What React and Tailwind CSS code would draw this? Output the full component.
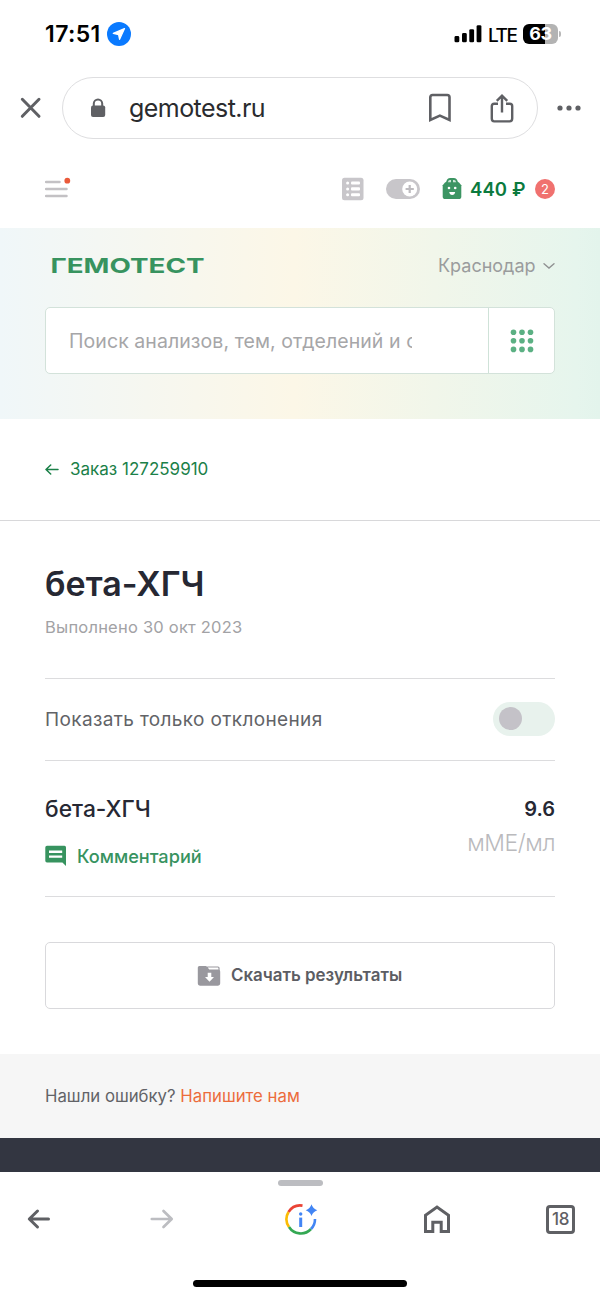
import React from "react";

function StatusBar() {
  return (
    <div className="flex h-[68px] items-center justify-between pl-[45px] pr-[39px]">
      <div className="flex items-center gap-[5px]">
        <span className="w-[57px] whitespace-nowrap text-[23px] font-semibold leading-none tracking-[0.4px] text-black">17:51</span>
        <svg width="24" height="24" viewBox="0 0 24 24">
          <circle cx="12" cy="12" r="12" fill="#0a7aff" />
          <path d="M17.5 6.6 12.6 17.3 11.6 12.6 6.3 11.4Z" fill="#fff" stroke="#fff" strokeWidth="1.3" strokeLinejoin="round" />
        </svg>
      </div>
      <div className="flex items-center">
        <svg width="28" height="18" viewBox="0 0 28 18" fill="#000">
          <rect x="0.5" y="11" width="4.8" height="6.3" rx="1.4" />
          <rect x="8" y="8" width="4.8" height="9.3" rx="1.4" />
          <rect x="15.3" y="4.2" width="4.8" height="13.1" rx="1.4" />
          <rect x="22.6" y="0.2" width="4.8" height="17.1" rx="1.4" />
        </svg>
        <span className="ml-[6px] w-[35px] whitespace-nowrap pt-[2px] text-[19px] font-medium leading-none tracking-[-1.4px] text-black">LTE</span>
        <div className="flex h-[20px] w-[35px] items-center justify-center rounded-[6px] bg-[linear-gradient(90deg,#000_62%,#b3b3b3_62%)] text-[18px] font-bold leading-none tracking-[-0.4px] text-white">63</div>
        <div className="ml-[1px] h-[6px] w-[2px] rounded-r-full bg-[#b8b8b8]" />
      </div>
    </div>
  );
}

function AddressBar() {
  return (
    <div className="flex h-[80px] items-center pl-[20px]">
      <svg width="22" height="22" viewBox="0 0 22 22" fill="none" stroke="#5f6064" strokeWidth="3" strokeLinecap="round">
        <path d="M2.3 2.3 19 19.3M19 2.3 2.3 19.3" />
      </svg>
      <div className="ml-[20px] flex h-[62px] w-[476px] shrink-0 items-center rounded-full border-[1.5px] border-[#dedee0] pl-[27px]">
        <svg width="16" height="20" viewBox="0 0 16 20">
          <path d="M3.8 9V5.6a4.2 4.2 0 0 1 8.4 0V9" fill="none" stroke="#5f6064" strokeWidth="2" />
          <rect x="1" y="7.6" width="14.2" height="11.4" rx="2" fill="#5f6064" />
        </svg>
        <span className="ml-[23px] w-[299px] text-[25px] leading-[30px] tracking-[-0.55px] text-[#2a2b2e]">gemotest.ru</span>
        <svg width="24" height="30" viewBox="0 0 24 30" fill="none" stroke="#5f6064" strokeWidth="2.6">
          <path d="M2.3 27V4.3Q2.3 2 4.6 2H19.2Q21.5 2 21.5 4.3V27L11.9 22.6Z" />
        </svg>
        <svg className="ml-[37px]" width="26" height="32" viewBox="0 0 26 32" fill="none" stroke="#5f6064" strokeWidth="2.4">
          <path d="M9 11.7H5.2Q2.8 11.7 2.8 14.1V26.6Q2.8 29.4 5.2 29.4H20.6Q23.2 29.4 23.2 26.6V14.1Q23.2 11.7 20.8 11.7H17" />
          <path d="M13 20.5V4.5M7.8 8.9 13 3.7 18.2 8.9" />
        </svg>
      </div>
      <svg className="ml-[18px]" width="26" height="6" viewBox="0 0 26 6" fill="#5f6064">
        <circle cx="4" cy="3" r="2.6" /><circle cx="13" cy="3" r="2.6" /><circle cx="22" cy="3" r="2.6" />
      </svg>
    </div>
  );
}

function SiteBar() {
  return (
    <div className="flex h-[80px] items-center justify-between px-[45px] pt-[2px]">
      <svg width="26" height="24" viewBox="0 0 26 24">
        <path d="M1 5H14.5M1 12H21.5M1 19H21.5" stroke="#c3c1c4" strokeWidth="2.5" strokeLinecap="round" />
        <circle cx="22.3" cy="3.7" r="2.9" fill="#ea5a3a" />
      </svg>
      <div className="flex items-center">
        <svg width="22" height="24" viewBox="0 0 22 24">
          <rect width="21.5" height="22.6" y="0.7" rx="2.5" fill="#c8c6ca" />
          <g fill="#fff">
            <circle cx="5.6" cy="6" r="1.5" /><circle cx="5.6" cy="11.9" r="1.5" /><circle cx="5.6" cy="17.7" r="1.5" />
            <rect x="9" y="4.4" width="9" height="3.1" rx="1" /><rect x="9" y="10.3" width="9" height="3.1" rx="1" /><rect x="9" y="16.2" width="9" height="3.1" rx="1" />
          </g>
        </svg>
        <svg className="ml-[22px]" width="34" height="20" viewBox="0 0 34 20">
          <rect width="34" height="20" rx="10" fill="#c8c6ca" />
          <circle cx="23.7" cy="10" r="7.5" fill="#fff" />
          <path d="M23.7 5.9V14.1M19.6 10H27.8" stroke="#bdbbbf" strokeWidth="2.2" />
        </svg>
        <svg className="ml-[22px]" width="20" height="22" viewBox="0 0 20 22">
          <path d="M4.2 6 5.8 2.2Q6.4 1 8 1H12Q13.6 1 14.2 2.2L15.8 6" fill="#cde5d7" stroke="#3c9563" strokeWidth="1.8" />
          <path d="M10 1V5" stroke="#3c9563" strokeWidth="2" />
          <path d="M3.2 4.3H16.8L19.3 7.2V18.4Q19.3 21 16.7 21H3.3Q.7 21 .7 18.4V7.2Z" fill="#3c9563" />
          <circle cx="7" cy="10" r="1.3" fill="#fff" /><circle cx="13.2" cy="10" r="1.3" fill="#fff" />
          <path d="M7.2 14H13.2Q12.7 17 10.2 17T7.2 14Z" fill="#fff" />
        </svg>
        <span className="ml-[8px] w-[65px] whitespace-nowrap text-[18.5px] font-semibold leading-none tracking-[0.1px] text-[#0b7a3e]">440 ₽</span>
        <div className="flex size-[20px] items-center justify-center rounded-full bg-[#f0716f] text-[13px] leading-none text-white">2</div>
      </div>
    </div>
  );
}

function Hero() {
  return (
    <div className="h-[191px] bg-[linear-gradient(90deg,#f0f7f9_0%,#fcf7e7_49%,#e6f5ed_96%,#e3f4ec_100%)] px-[45px] pt-[23px]">
      <div className="flex h-[30px] items-center justify-between">
        <svg width="165" height="22" viewBox="0 0 165 22">
          <text x="5.5" y="18.4" fontFamily="Inter, sans-serif" fontSize="20.5" fontWeight="700" fill="#37935f" textLength="154" lengthAdjust="spacingAndGlyphs">ГЕМОТЕСТ</text>
        </svg>
        <div className="flex items-center">
          <span className="w-[105px] whitespace-nowrap text-[18px] leading-none text-[#9a9c9d]">Краснодар</span>
          <svg width="12" height="8" viewBox="0 0 12 8" fill="none" stroke="#8f9192" strokeWidth="1.4" strokeLinecap="round">
            <path d="M1 1.8 6 6 11 1.8" />
          </svg>
        </div>
      </div>
      <div className="mt-[26px] flex h-[67px] rounded-[5px] border border-[#d3e2da] bg-white">
        <div className="flex w-[443px] items-center border-r border-[#cfe2d8] pl-[23px]">
          <span className="w-[343px] overflow-hidden whitespace-nowrap text-[19.5px] leading-[28px] tracking-[0.07px] text-[#a6a6a8]">Поиск анализов, тем, отделений и с</span>
        </div>
        <div className="flex flex-1 items-center justify-center">
          <svg width="24" height="26" viewBox="0 0 24 26" fill="#5bb083">
            <circle cx="3.5" cy="4.2" r="2.8" /><circle cx="12" cy="4.2" r="2.8" /><circle cx="20.5" cy="4.2" r="2.8" />
            <circle cx="3.5" cy="12.8" r="2.8" /><circle cx="12" cy="12.8" r="2.8" /><circle cx="20.5" cy="12.8" r="2.8" />
            <circle cx="3.5" cy="21.4" r="2.8" /><circle cx="12" cy="21.4" r="2.8" /><circle cx="20.5" cy="21.4" r="2.8" />
          </svg>
        </div>
      </div>
    </div>
  );
}

function OrderLink() {
  return (
    <div className="flex h-[102px] items-center border-b-[1.5px] border-[#d8d8da] px-[45px]">
      <svg width="14" height="12" viewBox="0 0 14 12" fill="none" stroke="#1b8048" strokeWidth="1.5" strokeLinecap="round" strokeLinejoin="round">
        <path d="M13 5.5H1.2M5.7 1 1 5.5 5.7 10" />
      </svg>
      <span className="ml-[11px] text-[17px] leading-none text-[#1b8048]">Заказ 127259910</span>
    </div>
  );
}

function Results() {
  return (
    <main className="h-[533px] px-[45px] pt-[40px]">
      <h1 className="text-[34px] font-semibold leading-[46px] text-[#262833]">бета-ХГЧ</h1>
      <p className="mt-[7px] text-[16.5px] leading-[26px] tracking-[0.22px] text-[#a2a2a5]">Выполнено 30 окт 2023</p>
      <div className="mt-[38px] flex h-[83px] items-center justify-between border-y-[1.5px] border-[#dcdcde]">
        <span className="text-[19px] leading-none tracking-[0.36px] text-[#626367]">Показать только отклонения</span>
        <div className="mb-[2px] flex h-[34px] w-[62px] items-center rounded-full bg-[#e8f2ed] pl-[6px]">
          <div className="size-[23px] rounded-full bg-[#c4c2c8]" />
        </div>
      </div>
      <div className="flex h-[136px] justify-between border-b-[1.5px] border-[#dcdcde] pt-[33px]">
        <div>
          <div className="text-[22.8px] font-medium leading-[30px] text-[#262833]">бета-ХГЧ</div>
          <div className="mt-[17px] flex h-[30px] items-center">
            <svg width="22" height="22" viewBox="0 0 22 22">
              <path d="M2 .8H19.5Q21 .8 21 2.4V21L17.4 17.5H2Q.3 17.5 .3 15.8V2.4Q.3.8 2 .8Z" fill="#37935f" />
              <path d="M4 6.7H17.2M4 11.6H17.2" stroke="#fff" strokeWidth="2.4" />
            </svg>
            <span className="ml-[10px] text-[18.15px] font-medium leading-none text-[#37935f]">Комментарий</span>
          </div>
        </div>
        <div className="text-right">
          <div className="text-[20px] font-semibold leading-[30px] text-[#262833]">9.6</div>
          <div className="mt-[4px] text-[23px] font-light leading-[30px] tracking-[-0.45px] text-[#bababd]">мМЕ/мл</div>
        </div>
      </div>
      <button className="mt-[45px] flex h-[67px] w-full items-center rounded-[5px] border-[1.5px] border-[#d9d9dc] pl-[151px]">
        <svg width="24" height="22" viewBox="0 0 24 22">
          <rect x="10" y="2" width="12" height="8" rx="1" fill="#fff" stroke="#99989e" strokeWidth="1.2" />
          <path d="M2.4 1H8.6Q9.5 1 10.2 2L12.3 4.6H21Q23.2 4.6 23.2 6.6V18.6Q23.2 20.7 21 20.7H3Q.8 20.7 .8 18.6V2.6Q.8 1 2.4 1Z" fill="#99989e" />
          <path d="M10.7 7.8H14.3V12H17L12.5 16.7 8 12H10.7Z" fill="#fff" />
        </svg>
        <span className="ml-[10px] whitespace-nowrap text-[16.9px] font-semibold leading-none text-[#5c5d63]">Скачать результаты</span>
      </button>
    </main>
  );
}

function BrowserNav() {
  return (
    <div className="flex h-[126px] flex-col items-center bg-white pt-[8px]">
      <div className="h-[6px] w-[45px] rounded-full bg-[#bcbdc1]" />
      <div className="mt-[15px] flex h-[36px] w-full items-center pl-[27px]">
        <svg width="24" height="22" viewBox="0 0 24 22" fill="none" stroke="#5f6064" strokeWidth="3" strokeLinecap="round" strokeLinejoin="round">
          <path d="M21.5 11H3M10.5 3 2.3 11 10.5 19" />
        </svg>
        <svg className="ml-[99px]" width="24" height="22" viewBox="0 0 24 22" fill="none" stroke="#bcbdc1" strokeWidth="2.7" strokeLinecap="round" strokeLinejoin="round">
          <path d="M1.8 11H21M13.5 3 21.7 11 13.5 19" />
        </svg>
        <svg className="ml-[110px]" width="34" height="34" viewBox="0 0 34 34" fill="none" strokeWidth="2.6">
          <path d="M4.5 10A14 14 0 0 1 18.5 3.6" stroke="#ea4335" />
          <path d="M4.5 10A14 14 0 0 0 5 25" stroke="#fbbc04" />
          <path d="M5 25A14 14 0 0 0 27 27" stroke="#34a853" />
          <path d="M27 27A14 14 0 0 0 31 17" stroke="#4285f4" />
          <path d="M16.7 15.6V25" stroke="#4285f4" strokeWidth="3" />
          <circle cx="16.7" cy="12" r="1.7" fill="#4285f4" />
          <path d="M27.5 2.3Q28.9 6.8 33.3 8.2 28.9 9.6 27.5 14 26.1 9.6 21.7 8.2 26.1 6.8 27.5 2.3Z" fill="#4285f4" />
        </svg>
        <svg className="ml-[105px]" width="28" height="30" viewBox="0 0 28 30" fill="none" stroke="#5f6064" strokeWidth="3">
          <path d="M2.5 27.5V11.2L14 3 25.5 11.2V27.5H18.2V18.2H9.8V27.5Z" />
        </svg>
        <div className="ml-[95px] flex size-[29px] items-center justify-center rounded-[4px] border-[3px] border-[#5f6064] text-[17px] font-medium leading-none tracking-[-0.5px] text-[#5f6064]">18</div>
      </div>
      <div className="mt-[43px] h-[7px] w-[214px] rounded-full bg-black" />
    </div>
  );
}

export default function App() {
  return (
    <div className="h-[1297px] w-[600px] overflow-hidden bg-white font-['Inter',sans-serif]">
      <StatusBar />
      <AddressBar />
      <SiteBar />
      <Hero />
      <OrderLink />
      <Results />
      <div className="flex h-[84px] items-center bg-[#f6f6f6] px-[45px]">
        <p className="whitespace-nowrap text-[16.75px] leading-none text-[#626367]">Нашли ошибку? <a className="text-[#ec6c3c]">Напишите нам</a></p>
      </div>
      <div className="h-[34px] bg-[#333641]" />
      <BrowserNav />
    </div>
  );
}
